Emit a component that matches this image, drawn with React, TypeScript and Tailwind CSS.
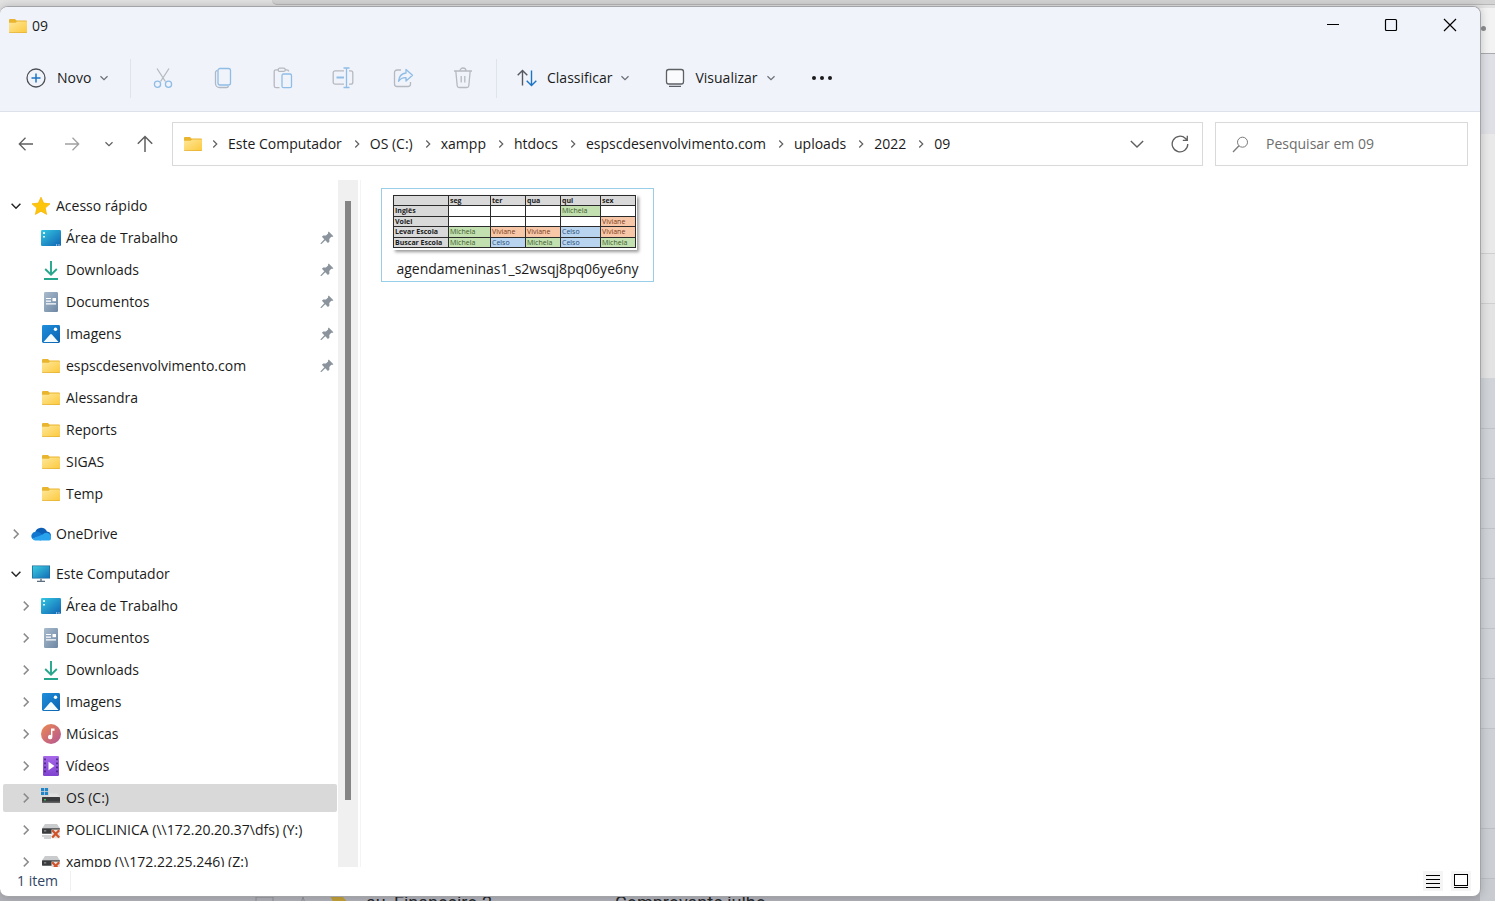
import React from 'react';
import clsx from 'clsx';

/* ---------- Icons ---------- */

function FolderIcon() {
  return (
    <svg width="20" height="20" viewBox="0 0 20 20">
      <defs>
        <linearGradient id="folderFront" x1="0" y1="0" x2="1" y2="1">
          <stop offset="0" stopColor="#ffe79a" />
          <stop offset="1" stopColor="#fbc93d" />
        </linearGradient>
      </defs>
      <path d="M1 4a1 1 0 0 1 1-1h5l1.5 1.6H18a1 1 0 0 1 1 1V15H1z" fill="#e9b52f" />
      <path d="M1 6.8h6.6l1.6-1.4H19v10.5a1 1 0 0 1-1 1H2a1 1 0 0 1-1-1z" fill="url(#folderFront)" />
      <path d="M1 16.4h18a.7.7 0 0 1-.7.6H1.7a.7.7 0 0 1-.7-.6z" fill="#d9a32c" />
    </svg>
  );
}

function StarIcon() {
  return (
    <svg width="20" height="20" viewBox="0 0 20 20">
      <path
        d="M10 1.2l2.6 5.9 6.4.7-4.8 4.3 1.4 6.3L10 15.2l-5.6 3.2 1.4-6.3L1 7.8l6.4-.7z"
        fill="#fdc60b"
        stroke="#f7b50c"
        strokeWidth=".8"
        strokeLinejoin="round"
      />
    </svg>
  );
}

function DesktopIcon() {
  return (
    <svg width="20" height="20" viewBox="0 0 20 20">
      <defs>
        <linearGradient id="desk" x1="0" y1="0" x2="1" y2="1">
          <stop offset="0" stopColor="#35c7e2" />
          <stop offset="1" stopColor="#0f63b3" />
        </linearGradient>
      </defs>
      <rect x="0" y="2" width="20" height="16" rx="1.2" fill="url(#desk)" />
      <path d="M2 4h2v2H2zM2 8h2v1.6H2z" fill="#d9f7ff" />
      <path d="M15 16.6h1.2v1H15zM17.4 16.6h1.2v1h-1.2z" fill="#fff" />
    </svg>
  );
}

function DownloadIcon() {
  return (
    <svg width="20" height="20" viewBox="0 0 20 20" fill="none" stroke="#27a58c" strokeWidth="1.9">
      <path d="M10 1v13.5M4.2 9l5.8 5.6L15.8 9M3 19h14" />
    </svg>
  );
}

function DocumentIcon() {
  return (
    <svg width="20" height="20" viewBox="0 0 20 20">
      <defs>
        <linearGradient id="doc" x1="0" y1="0" x2="1" y2="1">
          <stop offset="0" stopColor="#a9bccd" />
          <stop offset="1" stopColor="#6d86a3" />
        </linearGradient>
      </defs>
      <rect x="3" y="0" width="14" height="20" rx="1.2" fill="url(#doc)" />
      <path d="M5 6.5h5M5 9.2h5M5 11.8h10" stroke="#fff" strokeWidth="1.2" />
      <rect x="11.5" y="6" width="3.5" height="3.2" fill="#fff" />
    </svg>
  );
}

function PictureIcon() {
  return (
    <svg width="20" height="20" viewBox="0 0 20 20">
      <defs>
        <linearGradient id="pic" x1="0" y1="0" x2="1" y2="1">
          <stop offset="0" stopColor="#1f8fdc" />
          <stop offset="1" stopColor="#0b62b0" />
        </linearGradient>
      </defs>
      <rect x="1" y="1" width="18" height="18" rx="1.4" fill="url(#pic)" />
      <path d="M2.5 18l6.6-7.4a1.2 1.2 0 0 1 1.8 0L17.5 18z" fill="#f4fbff" />
      <circle cx="14.5" cy="5.2" r="1.7" fill="#fff" />
    </svg>
  );
}

function CloudIcon() {
  return (
    <svg width="20" height="20" viewBox="0 0 20 20">
      <path d="M4.2 8.2A6.3 6.3 0 0 1 16 7.5a4.5 4.5 0 0 1 4 4.5L9 16.5z" fill="#0c5fb5" />
      <path d="M4.5 7.8a4.3 4.3 0 0 0-2.9 7.3l10-4.3-3-2.2a5 5 0 0 0-4.2-.8z" fill="#1278cf" />
      <path d="M1.3 14.8l10.2-4.3a5 5 0 0 1 8.2.9 3 3 0 0 1-2 5.1H4.3a3.9 3.9 0 0 1-3-1.7z" fill="#29a3ee" />
    </svg>
  );
}

function ComputerIcon() {
  return (
    <svg width="20" height="20" viewBox="0 0 20 20">
      <defs>
        <linearGradient id="pc" x1="0" y1="0" x2="1" y2="1">
          <stop offset="0" stopColor="#3ccbe0" />
          <stop offset="1" stopColor="#1270b8" />
        </linearGradient>
      </defs>
      <rect x="1" y="1.5" width="18" height="13" fill="#1b6d9c" />
      <rect x="1.8" y="2.2" width="16.4" height="11.6" fill="url(#pc)" />
      <path d="M9 14.5h2V17H9z" fill="#8a9aa8" />
      <path d="M6 16.7h8V18H6z" fill="#5c6f80" />
    </svg>
  );
}

function MusicIcon() {
  return (
    <svg width="20" height="20" viewBox="0 0 20 20">
      <defs>
        <linearGradient id="music" x1="0" y1="0" x2="1" y2="1">
          <stop offset="0" stopColor="#ec8a4f" />
          <stop offset="1" stopColor="#b35596" />
        </linearGradient>
      </defs>
      <circle cx="10" cy="10" r="10" fill="url(#music)" />
      <path d="M10 4.5h3.5v2.3h-2.1v6.2a2.2 2.2 0 1 1-1.4-2z" fill="#fff" />
    </svg>
  );
}

function VideoIcon() {
  return (
    <svg width="20" height="20" viewBox="0 0 20 20">
      <defs>
        <linearGradient id="video" x1="0" y1="0" x2="0" y2="1">
          <stop offset="0" stopColor="#a768e8" />
          <stop offset="1" stopColor="#7f43cf" />
        </linearGradient>
      </defs>
      <rect x="2" y="0" width="16" height="20" rx="1.2" fill="url(#video)" />
      <path d="M4 2.5v16M16 2.5v16" stroke="#41207d" strokeWidth="1.6" strokeDasharray="1.8 2.2" />
      <path d="M7.5 5.7l6 4.3-6 4.3z" fill="#fff" />
    </svg>
  );
}

function DriveIcon() {
  return (
    <svg width="20" height="20" viewBox="0 0 20 20">
      <path d="M0 0h3.2v3.2H0zM3.9 0h3.2v3.2H3.9zM0 3.9h3.2v3.2H0zM3.9 3.9h3.2v3.2H3.9z" fill="#2186c7" />
      <path d="M8 5.5h8.5L19 9.5H8z" fill="#e3e3e3" />
      <rect x="1" y="9" width="18" height="6" rx=".6" fill="#3a3c3e" />
      <rect x="1" y="13.5" width="18" height="1.5" fill="#606264" />
      <rect x="3" y="11" width="2" height="1.4" fill="#45c860" />
    </svg>
  );
}

function NetDriveIcon() {
  return (
    <svg width="20" height="20" viewBox="0 0 20 20">
      <path d="M4 4h12l3 4.5H1z" fill="#c9cbcc" />
      <rect x="1" y="8.3" width="18" height="5.4" rx=".6" fill="#3a3c3e" />
      <path d="M3 10.2h2.2v1.3H3z" fill="#8b8d8f" />
      <path d="M1 16h9M3 18h7" stroke="#a5a7a9" strokeWidth="1.2" />
      <path d="M10.5 9.5h8.5v8.8h-8.5z" fill="#e6e0dd" />
      <path d="M11.2 10.2l7 7.4M18.2 10.2l-7 7.4" stroke="#d0522b" strokeWidth="2.2" />
    </svg>
  );
}

function PinIcon() {
  return (
    <svg width="14" height="14" viewBox="0 0 14 14" fill="#8b949d">
      <path d="M8.7.6l4.7 4.7-1.3.6-.8-.1-2 2.2.1 2.7-1.5 1.2-2.6-2.6L1.5 13H.6v-.8l3.7-4-2.4-2.4 1.3-1.4 2.7.1 2.2-2-.1-.9z" />
    </svg>
  );
}

function Chevron({ dir, size = 10, className }: { dir: 'right' | 'down'; size?: number; className?: string }) {
  return (
    <svg
      width={size}
      height={size}
      viewBox="0 0 10 10"
      fill="none"
      stroke="currentColor"
      strokeWidth={size > 10 ? 1 : 1.5}
      className={clsx('shrink-0', className)}
    >
      <path d={dir === 'right' ? 'M2.8.6L7.2 5 2.8 9.4' : 'M.6 2.8L5 7.2l4.4-4.4'} />
    </svg>
  );
}

/* ---------- Data ---------- */

type Item = {
  label: string;
  icon: () => React.ReactElement;
  level: 0 | 1;
  arrow?: 'right' | 'down';
  pinned?: boolean;
  selected?: boolean;
  spaced?: boolean;
};

const tree: Item[] = [
  { label: 'Acesso rápido', icon: StarIcon, level: 0, arrow: 'down' },
  { label: 'Área de Trabalho', icon: DesktopIcon, level: 1, pinned: true },
  { label: 'Downloads', icon: DownloadIcon, level: 1, pinned: true },
  { label: 'Documentos', icon: DocumentIcon, level: 1, pinned: true },
  { label: 'Imagens', icon: PictureIcon, level: 1, pinned: true },
  { label: 'espscdesenvolvimento.com', icon: FolderIcon, level: 1, pinned: true },
  { label: 'Alessandra', icon: FolderIcon, level: 1 },
  { label: 'Reports', icon: FolderIcon, level: 1 },
  { label: 'SIGAS', icon: FolderIcon, level: 1 },
  { label: 'Temp', icon: FolderIcon, level: 1 },
  { label: 'OneDrive', icon: CloudIcon, level: 0, arrow: 'right', spaced: true },
  { label: 'Este Computador', icon: ComputerIcon, level: 0, arrow: 'down', spaced: true },
  { label: 'Área de Trabalho', icon: DesktopIcon, level: 1, arrow: 'right' },
  { label: 'Documentos', icon: DocumentIcon, level: 1, arrow: 'right' },
  { label: 'Downloads', icon: DownloadIcon, level: 1, arrow: 'right' },
  { label: 'Imagens', icon: PictureIcon, level: 1, arrow: 'right' },
  { label: 'Músicas', icon: MusicIcon, level: 1, arrow: 'right' },
  { label: 'Vídeos', icon: VideoIcon, level: 1, arrow: 'right' },
  { label: 'OS (C:)', icon: DriveIcon, level: 1, arrow: 'right', selected: true },
  { label: 'POLICLINICA (\\\\172.20.20.37\\dfs) (Y:)', icon: NetDriveIcon, level: 1, arrow: 'right' },
  { label: 'xampp (\\\\172.22.25.246) (Z:)', icon: NetDriveIcon, level: 1, arrow: 'right' },
];

const crumbs = ['Este Computador', 'OS (C:)', 'xampp', 'htdocs', 'espscdesenvolvimento.com', 'uploads', '2022', '09'];

const days = ['seg', 'ter', 'qua', 'qui', 'sex'];

const agenda = [
  { task: 'Inglês', who: ['', '', '', 'Michela', ''] },
  { task: 'Volei', who: ['', '', '', '', 'Viviane'] },
  { task: 'Levar Escola', who: ['Michela', 'Viviane', 'Viviane', 'Celso', 'Viviane'] },
  { task: 'Buscar Escola', who: ['Michela', 'Celso', 'Michela', 'Celso', 'Michela'] },
];

const whoColor: Record<string, string> = {
  '': 'bg-white',
  Michela: 'bg-[#c3e0b0] text-[#3c5c2c]',
  Viviane: 'bg-[#f7c7a8] text-[#7c3c1c]',
  Celso: 'bg-[#b9d4ef] text-[#2c507c]',
};

const line = { fill: 'none', strokeWidth: 1.3 };

const editTools = [
  {
    label: 'Recortar',
    icon: (
      <svg width="22" height="22" viewBox="0 0 22 22" {...line}>
        <path d="M5 1.5l8.4 13M17 1.5L8.6 14.5" stroke="#b5b9c0" />
        <circle cx="5.5" cy="17.3" r="3.1" stroke="#8fbde6" />
        <circle cx="16.5" cy="17.3" r="3.1" stroke="#8fbde6" />
      </svg>
    ),
  },
  {
    label: 'Copiar',
    icon: (
      <svg width="22" height="22" viewBox="0 0 22 22" {...line}>
        <path d="M5.500 3.500a2 2 0 0 0-2 2v11a4 4 0 0 0 4 4h7a2 2 0 0 0 2-1.500" stroke="#b0b8c4" />
        <rect x="6" y="1.5" width="12.5" height="16.5" rx="2" stroke="#8fbde6" />
      </svg>
    ),
  },
  {
    label: 'Colar',
    icon: (
      <svg width="22" height="22" viewBox="0 0 22 22" {...line}>
        <path d="M6.5 2.8H4a1.8 1.8 0 0 0-1.8 1.8V19A1.8 1.8 0 0 0 4 20.7h3.5M13 2.8h1.8A1.8 1.8 0 0 1 16.6 4.6" stroke="#b5b9c0" />
        <rect x="6.2" y="1.2" width="7" height="3.2" rx="1.5" stroke="#b5b9c0" />
        <rect x="10" y="7" width="9.5" height="13.7" rx="1.5" stroke="#8fbde6" />
      </svg>
    ),
  },
  {
    label: 'Renomear',
    icon: (
      <svg width="22" height="22" viewBox="0 0 22 22" {...line}>
        <path d="M12 3.8H3.2a2 2 0 0 0-2 2v9.4a2 2 0 0 0 2 2H12M17 3.8h1.8a2 2 0 0 1 2 2v9.4a2 2 0 0 1-2 2H17" stroke="#b5b9c0" />
        <path d="M11.5 1h6M11.5 20.5h6M14.500 1v19.500" stroke="#8fbde6" />
        <path d="M4.5 10.5h7.5" stroke="#8fbde6" strokeWidth="1.9" />
      </svg>
    ),
  },
  {
    label: 'Compartilhar',
    icon: (
      <svg width="22" height="22" viewBox="0 0 22 22" {...line}>
        <path d="M9 3H5a2.500 2.500 0 0 0-2.500 2.500v11.500A2.500 2.500 0 0 0 5 19.500H16a2.500 2.500 0 0 0 2.500-2.500v-2" stroke="#b5b9c0" />
        <path d="M14 2.500l6.500 5.800-6.500 5.800v-3.400c-3.500-.2-5.500.8-7.500 3.600.5-4.500 3-8 7.500-8.300z" stroke="#8fbde6" strokeLinejoin="round" />
      </svg>
    ),
  },
  {
    label: 'Excluir',
    icon: (
      <svg width="22" height="22" viewBox="0 0 22 22" {...line} stroke="#b5b9c0">
        <path d="M2 4h18M8 4a3 3 0 0 1 6 0M3.8 4l1.4 14.7a2 2 0 0 0 2 1.8h7.6a2 2 0 0 0 2-1.8L18.2 4M9.200 9v6.500M12.800 9v6.500" />
      </svg>
    ),
  },
];

/* ---------- Sections ---------- */

// Mail list that stays visible around the edges of the window
function Backdrop() {
  return (
    <div className="absolute inset-0 overflow-hidden bg-[#e3e3e3]" aria-hidden="true">
      <div className="absolute left-[272px] right-0 top-0 h-[5px] rounded-bl-md border-b border-[#b9b9b9] bg-[#d4d4d4]" />
      <div className="absolute right-0 top-2 bottom-0 w-6 flex flex-col">
        <div className="flex h-[46px] items-center justify-center border-b border-[#a9a9ad] bg-[#f3f3f3]">
          <div className="mt-[-5px] size-[5px] rounded-full bg-[#8c8c90]" />
        </div>
        <div className="h-[80px] bg-[#dfe0e6]" />
        <div className="h-[120px] bg-[#e9e9e9] border-b border-[#cfcfcf]" />
        <div className="h-[50px] bg-[#e6e6e6] border-b border-[#cfcfcf]" />
        <div className="h-[74px] bg-[#e3e3e3]" />
        <div className="h-[51px] bg-[#d0d4d9] border-b border-[#bfc3c8]" />
        {[0, 1, 2, 3, 4, 5].map((n) => (
          <div key={n} className="h-[50px] bg-[#d0d4d9] border-b border-[#bfc3c8]" />
        ))}
        <div className="h-[100px] bg-[#cdd1d6] border-b border-[#bbbfc4]" />
        <div className="h-[50px] bg-[#cbcfd4] border-b border-[#bbbfc4]" />
        <div className="flex-1 bg-[#c8ccd1]" />
      </div>
      <div className="absolute left-0 right-[15px] bottom-0 h-3 bg-[#b1b2b9]" />
      <div className="absolute left-0 right-0 bottom-0 h-2 overflow-hidden whitespace-nowrap font-['Roboto'] text-lg leading-5 text-[#26272b]">
        <svg className="absolute left-[255px] top-[3px]" width="110" height="10" viewBox="0 0 110 10">
          <rect x="1" y="1" width="17" height="12" fill="none" stroke="#8f9096" />
          <path d="M48 1l-3 9M48 1l3 9" stroke="#8f9096" />
          <path d="M75 0h12l8 9H80z" fill="#c2a13a" />
        </svg>
        <span className="absolute left-[366px] top-0">au.</span>
        <span className="absolute left-[394px] top-0">Financeiro 2</span>
        <span className="absolute left-[615px] top-0">Comprovante julho</span>
      </div>
    </div>
  );
}

function TitleBar() {
  return (
    <div className="flex h-[38px] items-center justify-between">
      <div className="flex items-center gap-1 pl-2">
        <FolderIcon />
        <span>09</span>
      </div>
      <div className="flex h-full pb-[2px] text-black">
        <button aria-label="Minimizar" className="grid w-[58px] place-items-center">
          <svg width="14" height="14" viewBox="0 0 14 14" stroke="currentColor">
            <path d="M1 6.5h12" />
          </svg>
        </button>
        <button aria-label="Maximizar" className="grid w-[58px] place-items-center">
          <svg width="14" height="14" viewBox="0 0 14 14" stroke="currentColor" fill="none" strokeWidth="1.2">
            <rect x="1.5" y="1.5" width="11" height="11" rx="1" />
          </svg>
        </button>
        <button aria-label="Fechar" className="grid w-[60px] place-items-center">
          <svg width="14" height="14" viewBox="0 0 14 14" stroke="currentColor" strokeWidth="1.2">
            <path d="M1 1l12 12M13 1L1 13" />
          </svg>
        </button>
      </div>
    </div>
  );
}

function CommandBar() {
  return (
    <div className="flex h-[67px] items-center border-b border-[#dde1ea]">
      <button className="flex w-[130px] items-center pl-[26px]">
        <svg width="20" height="20" viewBox="0 0 20 20" fill="none" strokeWidth="1.3">
          <circle cx="10" cy="10" r="9" stroke="#4d5157" />
          <path d="M10 5.5v9M5.5 10h9" stroke="#1b74c4" strokeWidth="1.5" />
        </svg>
        <span className="ml-[11px]">Novo</span>
        <Chevron dir="down" size={8} className="ml-[9px] text-[#6b6f75]" />
      </button>
      <div className="mr-[2px] h-[39px] w-px bg-[#dfe3ea]" />
      {editTools.map((tool) => (
        <button key={tool.label} aria-label={tool.label} className="grid h-10 w-[60px] place-items-center">
          {tool.icon}
        </button>
      ))}
      <div className="ml-[3px] h-[39px] w-px bg-[#dfe3ea]" />
      <button className="flex items-center pl-5">
        <svg width="20" height="20" viewBox="0 0 20 20" fill="none" strokeWidth="1.4">
          <path d="M5.5 17.5V2.5M.7 7.2l4.8-4.8 4.8 4.8" stroke="#55595f" />
          <path d="M14.5 2.5v15M9.7 12.8l4.8 4.8 4.8-4.8" stroke="#1b74c4" />
        </svg>
        <span className="ml-[10px]">Classificar</span>
        <Chevron dir="down" size={8} className="ml-[9px] text-[#6b6f75]" />
      </button>
      <button className="flex items-center pl-9">
        <svg width="20" height="20" viewBox="0 0 20 20" fill="none" stroke="#5d6065" strokeWidth="1.3">
          <rect x="1.5" y="1.5" width="17" height="14.5" rx="2.2" fill="#fafbfd" />
          <path d="M4 18.3h12" />
        </svg>
        <span className="ml-[10px]">Visualizar</span>
        <Chevron dir="down" size={8} className="ml-[9px] text-[#6b6f75]" />
      </button>
      <button aria-label="Ver mais" className="pl-9">
        <svg width="22" height="6" viewBox="0 0 22 6" fill="#1b1b1b">
          <circle cx="3" cy="3" r="2" />
          <circle cx="11" cy="3" r="2" />
          <circle cx="19" cy="3" r="2" />
        </svg>
      </button>
    </div>
  );
}

function AddressBar() {
  return (
    <div className="flex items-center pt-[10px] pr-3 pb-[14px] text-[#5f5f5f]">
      <div className="flex w-[172px] items-center">
        <button aria-label="Voltar" className="ml-[18px]">
          <svg width="16" height="16" viewBox="0 0 16 16" fill="none" stroke="#5f5f5f" strokeWidth="1.3">
            <path d="M15 8H1.5M7.5 1.8L1.3 8l6.2 6.2" />
          </svg>
        </button>
        <button aria-label="Avançar" className="ml-[30px]">
          <svg width="16" height="16" viewBox="0 0 16 16" fill="none" stroke="#a0a0a0" strokeWidth="1.3">
            <path d="M1 8h13.5M8.5 1.8L14.7 8l-6.2 6.2" />
          </svg>
        </button>
        <button aria-label="Locais recentes" className="ml-[25px]">
          <Chevron dir="down" size={8} />
        </button>
        <button aria-label="Acima" className="ml-6">
          <svg width="16" height="18" viewBox="0 0 16 18" fill="none" stroke="#5f5f5f" strokeWidth="1.5">
            <path d="M8 17V1.5M.8 8.7L8 1.5l7.2 7.2" />
          </svg>
        </button>
      </div>
      <div className="flex h-11 flex-1 items-center border border-[#d9d9d9] pl-[10px]">
        <FolderIcon />
        <nav className="ml-2 flex items-center" aria-label="Caminho">
          {crumbs.map((crumb) => (
            <React.Fragment key={crumb}>
              <Chevron dir="right" size={8} className="mr-[9px]" />
              <a href="#" className="mr-[11px] text-[#1b1b1b]">
                {crumb}
              </a>
            </React.Fragment>
          ))}
        </nav>
        <button aria-label="Histórico" className="ml-auto">
          <Chevron dir="down" size={14} />
        </button>
        <button aria-label="Atualizar" className="mr-[13px] ml-[27px]">
          <svg width="18" height="18" viewBox="0 0 18 18" fill="none" stroke="#5f5f5f" strokeWidth="1.3">
            <path d="M16.8 9A7.8 7.8 0 1 1 14.5 3.5L16 5M16.3.8v4.5h-4.500" />
          </svg>
        </button>
      </div>
      <label className="ml-3 flex h-11 w-[253px] items-center gap-[17px] border border-[#d9d9d9] pl-4">
        <svg width="17" height="17" viewBox="0 0 17 17" fill="none" stroke="#7a7a7a" className="shrink-0">
          <circle cx="10.5" cy="6.2" r="5" />
          <path d="M7 9.8L1 16" strokeWidth="1.3" />
        </svg>
        <input
          type="text"
          aria-label="Pesquisar em 09"
          placeholder="Pesquisar em 09"
          className="w-full min-w-0 outline-none placeholder:text-[#6d6d6d]"
        />
      </label>
    </div>
  );
}

function TreeRow({ item }: { item: Item }) {
  const Icon = item.icon;
  return (
    <li className={clsx('flex h-8 items-center pr-px pl-[3px]', item.spaced && 'mt-2')}>
      <button
        className={clsx(
          'flex h-7 w-full items-center rounded-xs whitespace-nowrap',
          item.level === 0 ? 'pl-2' : 'pl-[18px]',
          item.selected && 'bg-[#d9d9d9]',
        )}
      >
        <span className={clsx('mr-[10px] w-[10px]', item.arrow === 'down' ? 'text-[#262626]' : 'text-[#8a8a8a]')}>
          {item.arrow && <Chevron dir={item.arrow} />}
        </span>
        <Icon />
        <span className="ml-[5px]">{item.label}</span>
        {item.pinned && (
          <span className="mr-[3px] ml-auto">
            <PinIcon />
          </span>
        )}
      </button>
    </li>
  );
}

function Thumbnail() {
  return (
    <div className="w-[244px] bg-white pr-[2px] pb-[2px] shadow-[2px_2px_3px_rgba(0,0,0,0.4)]">
      <table className="h-[53px] w-full table-fixed border-collapse text-left font-['Open_Sans'] text-[7px] leading-[9px] text-[#1b1b1b]">
        <colgroup>
          <col className="w-[55px]" />
          <col className="w-[42px]" />
          <col className="w-[35px]" />
          <col className="w-[35px]" />
          <col className="w-[40px]" />
          <col className="w-[35px]" />
        </colgroup>
        <thead>
          <tr className="bg-[#d9d9d9]">
            <th className="border border-[#2b2b2b] p-0" />
            {days.map((day) => (
              <th key={day} className="border border-[#2b2b2b] p-0 pl-px font-bold">
                {day}
              </th>
            ))}
          </tr>
        </thead>
        <tbody>
          {agenda.map((row) => (
            <tr key={row.task}>
              <th className="border border-[#2b2b2b] bg-[#d9d9d9] p-0 pl-px font-bold whitespace-nowrap">
                {row.task}
              </th>
              {row.who.map((who, i) => (
                <td key={i} className={clsx('border border-[#2b2b2b] p-0 pl-px', whoColor[who])}>
                  {who}
                </td>
              ))}
            </tr>
          ))}
        </tbody>
      </table>
    </div>
  );
}

function StatusBar() {
  return (
    <div className="flex h-[29px] items-center justify-between pr-[9px] pb-px pl-[17px]">
      <div className="flex items-center text-[#2f4565]">
        <span>1 item</span>
        <div className="ml-3 h-5 w-px bg-[#f0f0f0]" />
      </div>
      <div className="flex gap-2">
        <button aria-label="Detalhes" className="grid size-5 place-items-center bg-[#f5f5f5]">
          <svg width="14" height="14" viewBox="0 0 14 14" stroke="#000">
            <path d="M0 1.5h14M0 5.5h14M0 9.5h14M0 13.5h14" />
          </svg>
        </button>
        <button aria-label="Ícones grandes" className="grid size-5 place-items-center bg-[#f5f5f5]">
          <svg width="14" height="14" viewBox="0 0 14 14" stroke="#000" fill="none">
            <rect x=".5" y=".5" width="13" height="11" fill="#fff" />
            <path d="M0 13.5h14" />
          </svg>
        </button>
      </div>
    </div>
  );
}

export default function App() {
  return (
    <div className="relative h-screen overflow-hidden pt-[6px] pr-[14px] pb-1 font-['Open_Sans','Noto_Sans',sans-serif] text-sm text-[#1b1b1b]">
      <Backdrop />
      <div className="relative flex h-full flex-col overflow-hidden rounded-lg border-t border-r border-b border-[#a3a4a8] bg-white shadow-[0_0_10px_rgba(0,0,0,0.2)]">
        <header className="bg-[#f0f3fa]">
          <TitleBar />
          <CommandBar />
        </header>
        <AddressBar />
        <div className="flex min-h-0 flex-1">
          <ul className="w-[338px] overflow-hidden pt-[10px]">
            {tree.map((item, i) => (
              <TreeRow key={i} item={item} />
            ))}
          </ul>
          <div className="mr-[2px] flex w-5 flex-col items-center bg-[#f0f0f0] pt-[21px] pb-[67px]">
            <div className="w-[6px] flex-1 bg-[#858585]" />
          </div>
          <main className="flex-1 border-l border-[#f4f4f4] pt-2 pl-5">
            <button className="flex h-[94px] w-[273px] flex-col items-center justify-between border border-[#99cde8] pt-[6px] pb-[2px]">
              <div className="w-full pl-[11px]">
                <Thumbnail />
              </div>
              <span>agendameninas1_s2wsqj8pq06ye6ny</span>
            </button>
          </main>
        </div>
        <StatusBar />
      </div>
    </div>
  );
}
